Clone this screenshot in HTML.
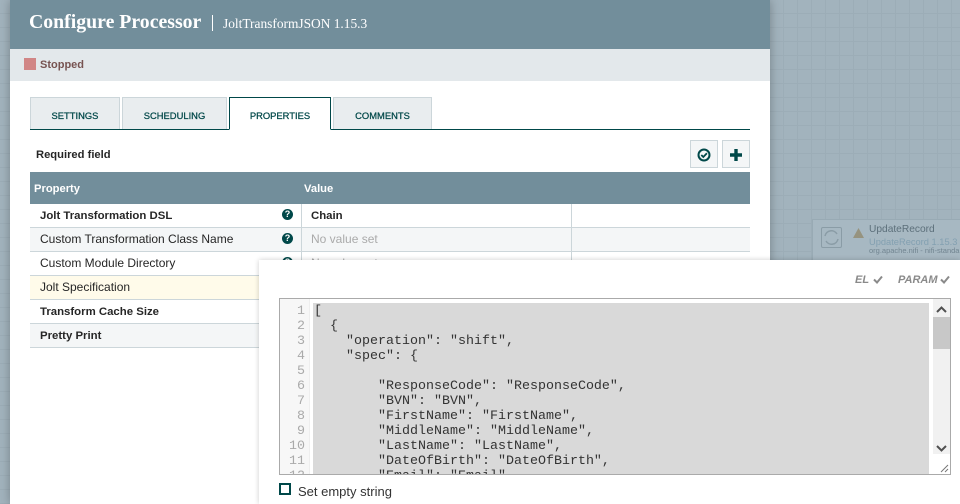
<!DOCTYPE html>
<html><head><meta charset="utf-8"><style>
*{box-sizing:border-box}
html,body{margin:0;padding:0}
body{width:960px;height:504px;overflow:hidden;position:relative;background-color:#a2b3bd;font-family:"Liberation Sans",sans-serif;
background-image:linear-gradient(#9cadb7 1px,transparent 1px),linear-gradient(90deg,#9cadb7 1px,transparent 1px);background-size:14px 14px;background-position:13px 13px}
.a{position:absolute;white-space:nowrap}
#dlg{left:10px;top:0;width:760px;height:504px;background:#fff;box-shadow:0 0 10px rgba(0,0,0,.28)}
.tab{position:absolute;top:97px;height:33px;background:#e9edef;border:1px solid #ccd6da;border-bottom:0;color:#004849;font-size:9.4px;font-weight:400;text-align:center;line-height:36px;-webkit-text-stroke:.25px #004849}
.row{position:absolute;left:30px;width:720px;height:24px;border-bottom:1px solid #ccd6da;font-size:12px;line-height:22px;color:#262626;padding-left:10px}
.b{font-weight:700;font-size:11.4px;line-height:24px}
.q{position:absolute;left:282px;width:11px;height:11px;border-radius:50%;background:#004849;color:#fff;font-size:9px;font-weight:700;line-height:11px;text-align:center}
.btn{position:absolute;top:140px;width:28px;height:28px;background:#f4f6f7;border:1px solid #ccd6da}
pre{margin:0;font-family:"Liberation Mono",monospace;font-size:13.33px;line-height:15px;color:#333;white-space:pre !important}
</style></head><body>
<div class="a" id="dlg"></div>
<div class="a" style="left:10px;top:0;width:760px;height:49px;background:#728e9b"></div>
<div class="a" style="left:29px;top:9px;font:700 19.8px/26px 'Liberation Serif',serif;color:#fff">Configure Processor</div>
<div class="a" style="left:212px;top:15px;width:1px;height:16px;background:#fff"></div>
<div class="a" style="left:223px;top:14px;font:13.4px/20px 'Liberation Serif',serif;color:#fff">JoltTransformJSON 1.15.3</div>
<div class="a" style="left:10px;top:49px;width:760px;height:32px;background:#e3e8eb"></div>
<div class="a" style="left:24px;top:58px;width:12px;height:12px;background:#d18686"></div>
<div class="a" style="left:40px;top:57px;font-size:11px;font-weight:700;line-height:16px;color:#775351">Stopped</div>

<div class="tab" style="left:30px;width:90px">SETTINGS</div>
<div class="tab" style="left:122px;width:105px">SCHEDULING</div>
<div class="tab" style="left:333px;width:99px">COMMENTS</div>
<div class="a" style="left:30px;top:129px;width:720px;height:1px;background:#004849"></div>
<div class="tab" style="left:229px;width:102px;top:97px;height:33px;background:#fff;border:1px solid #004849;border-bottom:1px solid #fff">PROPERTIES</div>

<div class="a" style="left:36px;top:147px;font-size:11.2px;font-weight:700;line-height:16px;color:#262626">Required field</div>
<div class="btn" style="left:690px"><svg width="26" height="26" style="display:block"><circle cx="13" cy="14" r="5.5" fill="none" stroke="#004849" stroke-width="2"/><path d="M10.3 14l2 2 3.600-3.800" fill="none" stroke="#004849" stroke-width="1.800"/></svg></div>
<div class="btn" style="left:722px"><svg width="26" height="26" style="display:block"><path d="M13 8v12M7 14h12" stroke="#004849" stroke-width="3.400" fill="none"/></svg></div>

<div class="a" style="left:30px;top:172px;width:720px;height:32px;background:#728e9b"></div>
<div class="a" style="left:34px;top:181px;font-size:11.2px;font-weight:700;line-height:16px;color:#fff">Property</div>
<div class="a" style="left:304px;top:181px;font-size:11.2px;font-weight:700;line-height:16px;color:#fff">Value</div>

<div class="row b" style="top:204px;background:#fff">Jolt Transformation DSL</div>
<div class="row" style="top:228px;background:#f4f6f7">Custom Transformation Class Name</div>
<div class="row" style="top:252px;background:#fff">Custom Module Directory</div>
<div class="row" style="top:276px;background:#fffbea">Jolt Specification</div>
<div class="row b" style="top:300px;background:#fff">Transform Cache Size</div>
<div class="row b" style="top:324px;background:#f4f6f7">Pretty Print</div>
<div class="q" style="top:209px">?</div>
<div class="q" style="top:233px">?</div>
<div class="q" style="top:257px">?</div>
<div class="a" style="left:301px;top:204px;width:1px;height:72px;background:#ccd6da"></div>
<div class="a" style="left:571px;top:204px;width:1px;height:72px;background:#ccd6da"></div>
<div class="a" style="left:311px;top:209px;font-size:11.4px;font-weight:700;line-height:14px;color:#262626">Chain</div>
<div class="a" style="left:311px;top:232px;font-size:12px;line-height:14px;color:#aaa">No value set</div>
<div class="a" style="left:311px;top:256px;font-size:12px;line-height:14px;color:#aaa">No value set</div>

<div class="a" style="left:812px;top:219px;width:148px;height:41px;background:#a7b8c2;border-left:1px solid #98aab4;border-top:1px solid #98aab4"></div>
<div class="a" style="left:821px;top:227px;width:21px;height:21px;border:1px solid #8a9ca6;border-radius:2px"><svg width="19" height="19" style="display:block"><path d="M3 8a6.500 6.500 0 0 1 12-2M16 11a6.500 6.500 0 0 1-12 2" fill="none" stroke="#8a9ca6" stroke-width="1.500"/></svg></div>
<svg class="a" style="left:853px;top:228px" width="11" height="10"><path d="M5.500 0L11 10H0z" fill="#96937f"/></svg>
<div class="a" style="left:869px;top:224px;font-size:10.200px;line-height:12px;color:#5d707b">UpdateRecord</div>
<div class="a" style="left:869px;top:236px;font-size:9.300px;line-height:12px;color:#83a0b1">UpdateRecord 1.15.3</div>
<div class="a" style="left:869px;top:245px;font-size:7.500px;line-height:11px;color:#728591">org.apache.nifi - nifi-standard</div>

<div class="a" style="left:259px;top:260px;width:701px;height:244px;background:#fff;box-shadow:0 0 5px rgba(0,0,0,.2)"></div>
<div class="a" style="left:855px;top:274px;font-size:11px;font-weight:700;font-style:italic;line-height:13px;color:#8a8a8a">EL</div>
<svg class="a" style="left:873px;top:275px" width="10" height="9"><path d="M1 4.500l3 3 5-6" fill="none" stroke="#8a8a8a" stroke-width="2"/></svg>
<div class="a" style="left:898px;top:274px;font-size:11px;font-weight:700;font-style:italic;line-height:13px;color:#8a8a8a">PARAM</div>
<svg class="a" style="left:940px;top:275px" width="10" height="9"><path d="M1 4.500l3 3 5-6" fill="none" stroke="#8a8a8a" stroke-width="2"/></svg>

<div class="a" style="left:279px;top:298px;width:672px;height:177px;background:#fff;border:1px solid #aaa;overflow:hidden">
<div class="a" style="left:0;top:0;width:30px;height:175px;background:#f7f7f7;border-right:1px solid #eee"></div>
<pre class="a" style="left:2px;top:5px;width:23px;text-align:right;color:#aaa">1
2
3
4
5
6
7
8
9
10
11
12</pre>
<div class="a" style="left:33px;top:4px;width:616px;height:171px;background:#d9d9d9"></div>
<pre class="a" style="left:34px;top:5px">[
  {
    "operation": "shift",
    "spec": {

        "ResponseCode": "ResponseCode",
        "BVN": "BVN",
        "FirstName": "FirstName",
        "MiddleName": "MiddleName",
        "LastName": "LastName",
        "DateOfBirth": "DateOfBirth",
        "Email": "Email"</pre>
<div class="a" style="left:653px;top:0;width:17px;height:155px;background:#f1f1f1"></div>
<div class="a" style="left:653px;top:18px;width:17px;height:32px;background:#c8c8c8"></div>
<svg class="a" style="left:656px;top:7px" width="11" height="7"><path d="M1 6l4.500-4.500L10 6" fill="none" stroke="#505050" stroke-width="2"/></svg>
<svg class="a" style="left:656px;top:146px" width="11" height="7"><path d="M1 1l4.500 4.500L10 1" fill="none" stroke="#505050" stroke-width="2"/></svg>
<svg class="a" style="left:660px;top:165px" width="9" height="9"><path d="M1 8L8 1M5 8L8 5" stroke="#777" stroke-width="1" fill="none"/></svg>
</div>
<div class="a" style="left:279px;top:483px;width:12px;height:12px;border:2px solid #004849"></div>
<div class="a" style="left:298px;top:484px;font-size:13px;line-height:15px;color:#333">Set empty string</div>
</body></html>
